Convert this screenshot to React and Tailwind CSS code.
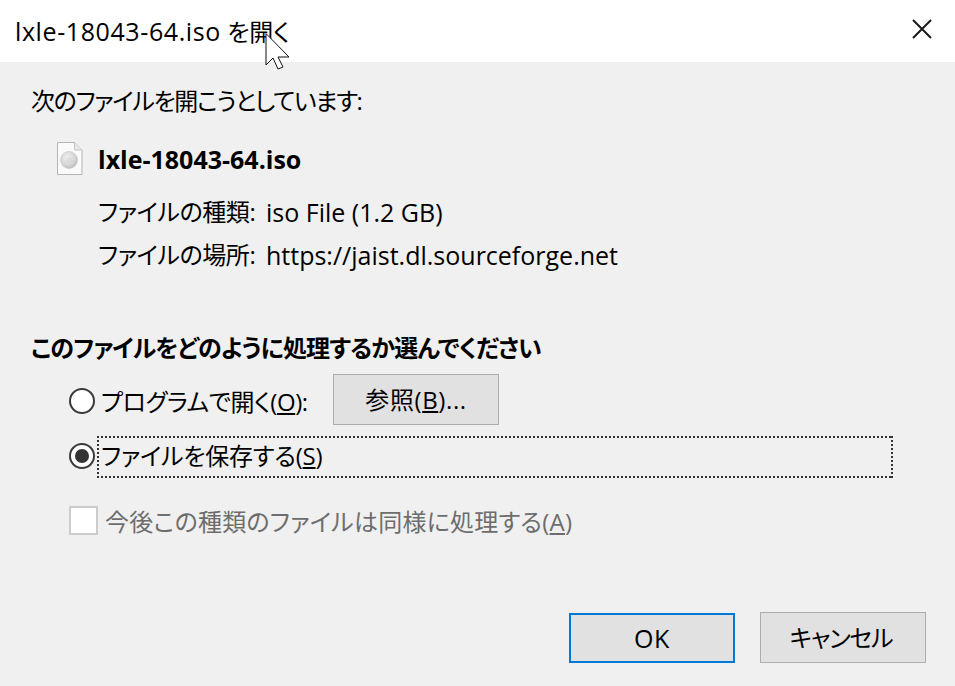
import React from "react";

const font = { fontFamily: '"Open Sans", "Noto Sans CJK JP", sans-serif' };

function FileIcon() {
  return (
    <svg width="26" height="33" viewBox="0 0 26 33" className="shrink-0">
      <defs>
        <radialGradient id="disc" cx="0.4" cy="0.35" r="0.75">
          <stop offset="0" stopColor="#f0f0f0" />
          <stop offset="0.6" stopColor="#d4d6d4" />
          <stop offset="1" stopColor="#b4b6b4" />
        </radialGradient>
      </defs>
      <path d="M0.5 0.5H17.5L25 8V32.5H0.5Z" fill="#fafafa" stroke="#b4b4b4" />
      <path d="M17.5 0.5V8H25" fill="#e8e8e8" stroke="#c4c4c4" />
      <circle cx="12" cy="18" r="8.5" fill="url(#disc)" stroke="#bcbcbc" strokeWidth="0.5" />
      <circle cx="12" cy="18" r="2" fill="#e4e4e4" stroke="#c0c0c0" strokeWidth="0.5" />
    </svg>
  );
}

function Radio({ checked, className }) {
  return (
    <span className={`w-[26px] h-[26px] rounded-full border-[2px] border-[#3a3a3a] bg-white flex items-center justify-center shrink-0 ${className}`}>
      {checked && <span className="w-[14px] h-[14px] rounded-full bg-[#333333]" />}
    </span>
  );
}

export default function App() {
  return (
    <div className="w-[955px] h-[686px] relative overflow-hidden flex flex-col bg-[#f0f0f0] text-[24px] leading-[32px] text-black whitespace-nowrap [font-feature-settings:'palt']" style={font}>
      <div className="h-[62px] bg-white flex items-center justify-between pl-[15px] pr-[23px] shrink-0">
        <span><span className="text-[25px] tracking-[0.6px]">lxle-18043-64.iso</span> を開く</span>
        <svg width="20" height="20" viewBox="0 0 20 20" className="mb-[4px]">
          <path d="M1 1L19 19M19 1L1 19" stroke="#1a1a1a" strokeWidth="2" fill="none" />
        </svg>
      </div>

      <div className="flex-1 flex flex-col pt-[23px] pl-[32px]">
        <p className="-ml-[1px] tracking-[-1.3px]">次のファイルを開こうとしています:</p>

        <div className="flex items-center gap-[15px] mt-[25px] pl-[25px]">
          <FileIcon />
          <span className="font-bold text-[25px]">lxle-18043-64.iso</span>
        </div>

        <div className="grid grid-cols-[168px_auto] justify-start gap-y-[11px] mt-[21px] pl-[66px]">
          <span className="tracking-[-0.4px]">ファイルの種類:</span>
          <span className="text-[25px]">iso File (1.2 GB)</span>
          <span className="tracking-[-0.4px]">ファイルの場所:</span>
          <span className="text-[25px]">https://jaist.dl.sourceforge.net</span>
        </div>

        <p className="font-bold mt-[61px] -ml-[1px] tracking-[-0.85px]">このファイルをどのように処理するか選んでください</p>

        <div className="flex items-center mt-[10px] pl-[37px] h-[52px]">
          <Radio className="mt-[2px]" />
          <span className="ml-[6px] w-[232px] pt-[4px] tracking-[-0.4px]">プログラムで開く(<u>O</u>):</span>
          <button className="w-[166px] h-[51px] mb-[1px] bg-[#e1e1e1] border-[1px] border-[#adadad] tracking-[0.6px]">参照(<u>B</u>)...</button>
        </div>

        <div className="flex items-center mt-[10px] pl-[37px] h-[42px]">
          <Radio checked className="mb-[2px]" />
          <span className="ml-[2px] w-[796px] h-[42px] flex items-center pl-[4px] pb-[2px] bg-no-repeat [background-image:repeating-linear-gradient(90deg,#333_0_2px,transparent_2px_4px),repeating-linear-gradient(90deg,#333_0_2px,transparent_2px_4px),repeating-linear-gradient(0deg,#333_0_2px,transparent_2px_4px),repeating-linear-gradient(0deg,#333_0_2px,transparent_2px_4px)] [background-size:100%_2px,100%_2px,2px_100%,2px_100%] [background-position:top_left,bottom_left,top_left,top_right]">
            <span className="tracking-[-0.2px]">ファイルを保存する(<u>S</u>)</span>
          </span>
        </div>

        <div className="flex items-start mt-[28px] pl-[37px] text-[#6d6d6d]">
          <span className="w-[29px] h-[29px] border-[2px] border-[#cccccc] bg-white shrink-0" />
          <span className="ml-[7px] tracking-[0.25px]">今後この種類のファイルは同様に処理する(<u>A</u>)</span>
        </div>

        <div className="flex justify-end gap-[25px] mt-[74px] pr-[29px]">
          <button className="w-[166px] h-[50px] mt-[1px] bg-[#e1e1e1] border-[2px] border-[#0078d7] text-[25px] tracking-[0.5px]">OK</button>
          <button className="w-[166px] h-[51px] pr-[4px] bg-[#e1e1e1] border-[1px] border-[#adadad] tracking-[-1.2px]">キャンセル</button>
        </div>
      </div>

      <svg width="26" height="38" viewBox="0 0 26 38" className="absolute left-[265px] top-[33px]">
        <path d="M1 0.5V32L8 25L13 36L18 34L13 24H24Z" fill="#fff" stroke="#111" strokeWidth="1" />
      </svg>
    </div>
  );
}
